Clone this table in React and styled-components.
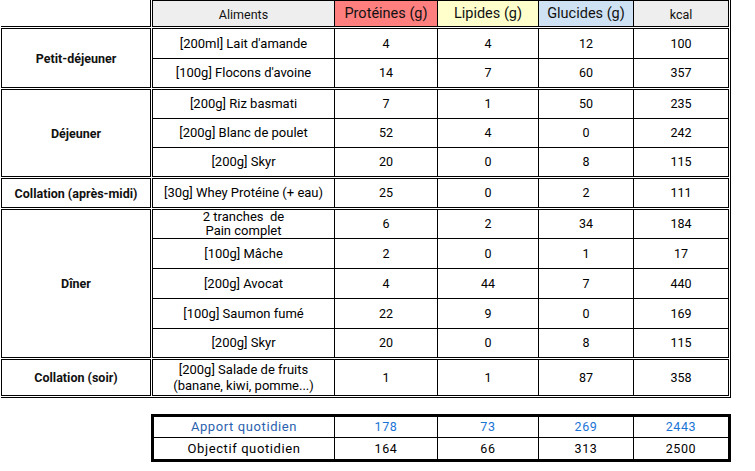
import React from "react";
import styled, { createGlobalStyle } from "styled-components";

const GlobalStyle = createGlobalStyle`
  html, body { margin: 0; padding: 0; background: #ffffff; }
  body { font-family: Roboto, "Liberation Sans", sans-serif; color: #000; }
`;

const COLS = "181px 102px 100px 94px 94px";
const SUM_COLS = "180px 102px 100px 94px 94px";

const Page = styled.div`
  padding-left: 1px;
  width: 754px;
  box-sizing: border-box;
`;

const MainTable = styled.div`
  display: flex;
  flex-direction: column;
  gap: 1px;
  width: fit-content;
  border-right: 1px solid #000;
  border-bottom: 1px solid #000;
  padding-right: 1px;
  padding-bottom: 1px;
`;

const Band = styled.div`
  display: flex;
  gap: 1px;
`;

const Corner = styled.div`
  width: 150px;
  height: 27px;
  box-sizing: border-box;
  border-right: 1px solid #000;
  border-bottom: 1px solid #000;
`;

const Grid = styled.div`
  display: grid;
  grid-template-columns: ${(p) => p.$cols || COLS};
  grid-template-rows: ${(p) => p.$rows};
  gap: 1px;
  background: #000;
  border: ${(p) => p.$border || 1}px solid #000;
`;

const HeadCell = styled.div`
  display: flex;
  align-items: center;
  justify-content: center;
  background: ${(p) => p.$bg};
  font-size: ${(p) => (p.$big ? "14.5px" : "12.5px")};
  padding-top: ${(p) => (p.$big ? "0" : "1px")};
  color: #111;
`;

const MealCell = styled.div`
  width: 150px;
  box-sizing: border-box;
  border: 1px solid #000;
  display: flex;
  align-items: center;
  justify-content: center;
  font-weight: 700;
  font-size: 12.5px;
  color: #111;
`;

const Cell = styled.div`
  display: flex;
  flex-direction: column;
  align-items: center;
  justify-content: center;
  background: #fff;
  font-size: ${(p) => (p.$num ? "12.5px" : "13px")};
  letter-spacing: ${(p) => (p.$spaced ? "0.6px" : "0")};
  color: ${(p) => p.$color || "#000"};
  text-align: center;
  line-height: ${(p) => (p.$tight ? "14px" : "16px")};
`;

const Line = styled.span`
  white-space: pre;
`;

const Summary = styled.div`
  margin-top: 16px;
  margin-left: 150px;
  width: fit-content;
`;

const data = [
  {
    meal: "Petit-déjeuner",
    rows: [
      { name: ["[200ml] Lait d'amande"], v: [4, 4, 12, 100], h: 29 },
      { name: ["[100g] Flocons d'avoine"], v: [14, 7, 60, 357], h: 28 },
    ],
  },
  {
    meal: "Déjeuner",
    rows: [
      { name: ["[200g] Riz basmati"], v: [7, 1, 50, 235], h: 28 },
      { name: ["[200g] Blanc de poulet"], v: [52, 4, 0, 242], h: 28 },
      { name: ["[200g] Skyr"], v: [20, 0, 8, 115], h: 28 },
    ],
  },
  {
    meal: "Collation (après-midi)",
    rows: [{ name: ["[30g] Whey Protéine (+ eau)"], v: [25, 0, 2, 111], h: 28 }],
  },
  {
    meal: "Dîner",
    rows: [
      { name: ["2 tranches  de", "Pain complet"], v: [6, 2, 34, 184], h: 28, tight: true },
      { name: ["[100g] Mâche"], v: [2, 0, 1, 17], h: 29 },
      { name: ["[200g] Avocat"], v: [4, 44, 7, 440], h: 29 },
      { name: ["[100g] Saumon fumé"], v: [22, 9, 0, 169], h: 29 },
      { name: ["[200g] Skyr"], v: [20, 0, 8, 115], h: 28 },
    ],
  },
  {
    meal: "Collation (soir)",
    rows: [
      { name: ["[200g] Salade de fruits", "(banane, kiwi, pomme...)"], v: [1, 1, 87, 358], h: 35 },
    ],
  },
];

const headers = [
  { label: "Aliments", bg: "#eeeeee" },
  { label: "Protéines (g)", bg: "#ff7f7f", big: true },
  { label: "Lipides (g)", bg: "#ffffcc", big: true },
  { label: "Glucides (g)", bg: "#cfe2f3", big: true },
  { label: "kcal", bg: "#eeeeee" },
];

const summary = [
  { label: "Apport quotidien", v: [178, 73, 269, 2443], color: "#2b62b0", numColor: "#1a74d6", h: 20 },
  { label: "Objectif quotidien", v: [164, 66, 313, 2500], h: 21 },
];

export default function App() {
  return (
    <Page>
      <GlobalStyle />
      <MainTable>
        <Band>
          <Corner />
          <Grid $rows="25px">
            {headers.map((h) => (
              <HeadCell key={h.label} $bg={h.bg} $big={h.big}>
                {h.label}
              </HeadCell>
            ))}
          </Grid>
        </Band>
        {data.map((b) => (
          <Band key={b.meal}>
            <MealCell>{b.meal}</MealCell>
            <Grid $rows={b.rows.map((r) => `${r.h}px`).join(" ")}>
              {b.rows.map((r, i) => (
                <React.Fragment key={i}>
                  <Cell $tight={r.tight}>
                    {r.name.map((n) => (
                      <Line key={n}>{n}</Line>
                    ))}
                  </Cell>
                  {r.v.map((x, j) => (
                    <Cell key={j} $num>
                      {x}
                    </Cell>
                  ))}
                </React.Fragment>
              ))}
            </Grid>
          </Band>
        ))}
      </MainTable>
      <Summary>
        <Grid $cols={SUM_COLS} $border={3} $rows={summary.map((s) => `${s.h}px`).join(" ")}>
          {summary.map((s) => (
            <React.Fragment key={s.label}>
              <Cell $color={s.color} $spaced>
                {s.label}
              </Cell>
              {s.v.map((x, j) => (
                <Cell key={j} $num $spaced $color={s.numColor}>
                  {x}
                </Cell>
              ))}
            </React.Fragment>
          ))}
        </Grid>
      </Summary>
    </Page>
  );
}
